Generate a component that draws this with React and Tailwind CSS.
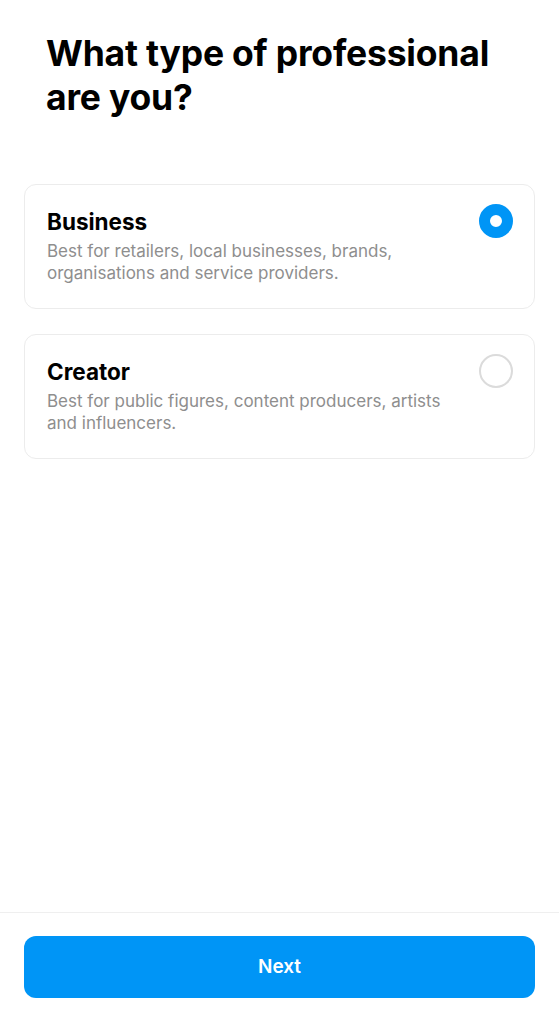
export default function App() {
  const options = [
    {
      id: 'business',
      title: 'Business',
      text: 'Best for retailers, local businesses, brands, organisations and service providers.',
      selected: true,
    },
    {
      id: 'creator',
      title: 'Creator',
      text: 'Best for public figures, content producers, artists and influencers.',
      selected: false,
    },
  ];

  return (
    <div
      className="flex h-screen flex-col bg-white text-black"
      style={{ fontFamily: 'Inter, "Noto Sans", sans-serif' }}
    >
      <div className="flex-1 px-6">
        <h1 className="pl-[22px] pt-[32px] text-[35.5px] font-bold leading-[44px] tracking-[-0.2px]">
          What type of professional
          <br />
          are you?
        </h1>

        <div className="mt-[64px] flex flex-col gap-[25px]">
          {options.map((opt) => (
            <div
              key={opt.id}
              className="flex h-[125px] items-start justify-between rounded-[12px] border border-[#ececec] pl-[22px] pr-[21px] pt-[23px]"
            >
              <div className="flex flex-col">
                <div className="text-[22.5px] font-bold leading-[28px]">{opt.title}</div>
                <p className="mt-[4px] max-w-[420px] text-[17px] leading-[22px] text-[#8e8e8e]">
                  {opt.text}
                </p>
              </div>
              {opt.selected ? (
                <div className="mt-[-4px] h-[34px] w-[34px] shrink-0 rounded-full border-[11px] border-[#0095f6] bg-white" />
              ) : (
                <div className="mt-[-4px] h-[34px] w-[34px] shrink-0 rounded-full border-2 border-[#dbdbdb]" />
              )}
            </div>
          ))}
        </div>
      </div>

      <div className="border-t border-[#efefef] px-6 pb-[26px] pt-[23px]">
        <button className="flex h-[62px] w-full items-center justify-center rounded-[12px] bg-[#0095f6] text-[19px] font-semibold text-white">
          Next
        </button>
      </div>
    </div>
  );
}
